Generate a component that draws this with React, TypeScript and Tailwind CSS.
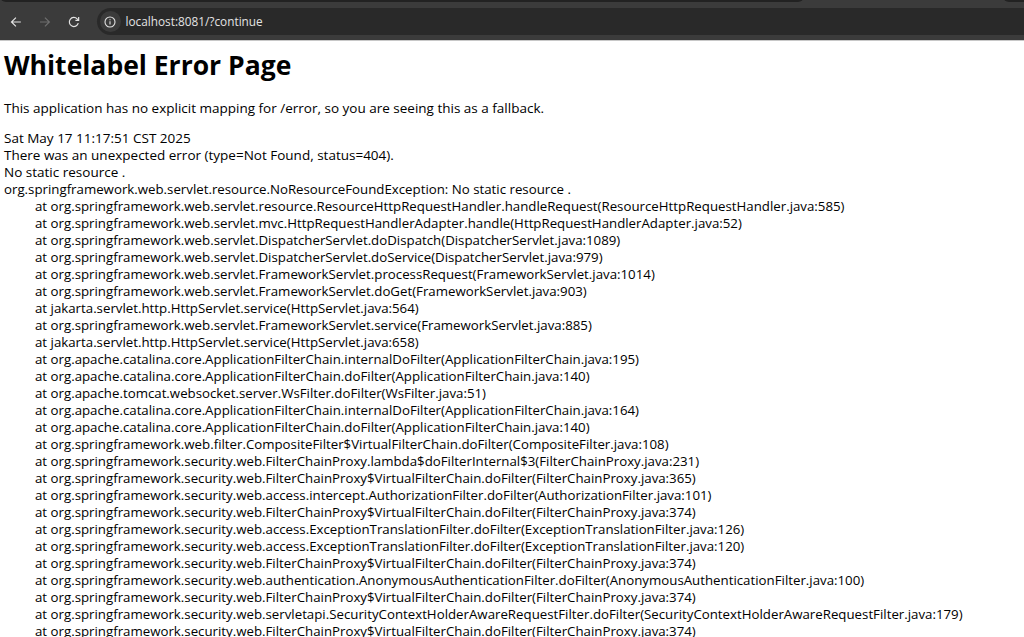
const lines = [
  "org.springframework.web.servlet.resource.ResourceHttpRequestHandler.handleRequest(ResourceHttpRequestHandler.java:585)",
  "org.springframework.web.servlet.mvc.HttpRequestHandlerAdapter.handle(HttpRequestHandlerAdapter.java:52)",
  "org.springframework.web.servlet.DispatcherServlet.doDispatch(DispatcherServlet.java:1089)",
  "org.springframework.web.servlet.DispatcherServlet.doService(DispatcherServlet.java:979)",
  "org.springframework.web.servlet.FrameworkServlet.processRequest(FrameworkServlet.java:1014)",
  "org.springframework.web.servlet.FrameworkServlet.doGet(FrameworkServlet.java:903)",
  "jakarta.servlet.http.HttpServlet.service(HttpServlet.java:564)",
  "org.springframework.web.servlet.FrameworkServlet.service(FrameworkServlet.java:885)",
  "jakarta.servlet.http.HttpServlet.service(HttpServlet.java:658)",
  "org.apache.catalina.core.ApplicationFilterChain.internalDoFilter(ApplicationFilterChain.java:195)",
  "org.apache.catalina.core.ApplicationFilterChain.doFilter(ApplicationFilterChain.java:140)",
  "org.apache.tomcat.websocket.server.WsFilter.doFilter(WsFilter.java:51)",
  "org.apache.catalina.core.ApplicationFilterChain.internalDoFilter(ApplicationFilterChain.java:164)",
  "org.apache.catalina.core.ApplicationFilterChain.doFilter(ApplicationFilterChain.java:140)",
  "org.springframework.web.filter.CompositeFilter$VirtualFilterChain.doFilter(CompositeFilter.java:108)",
  "org.springframework.security.web.FilterChainProxy.lambda$doFilterInternal$3(FilterChainProxy.java:231)",
  "org.springframework.security.web.FilterChainProxy$VirtualFilterChain.doFilter(FilterChainProxy.java:365)",
  "org.springframework.security.web.access.intercept.AuthorizationFilter.doFilter(AuthorizationFilter.java:101)",
  "org.springframework.security.web.FilterChainProxy$VirtualFilterChain.doFilter(FilterChainProxy.java:374)",
  "org.springframework.security.web.access.ExceptionTranslationFilter.doFilter(ExceptionTranslationFilter.java:126)",
  "org.springframework.security.web.access.ExceptionTranslationFilter.doFilter(ExceptionTranslationFilter.java:120)",
  "org.springframework.security.web.FilterChainProxy$VirtualFilterChain.doFilter(FilterChainProxy.java:374)",
  "org.springframework.security.web.authentication.AnonymousAuthenticationFilter.doFilter(AnonymousAuthenticationFilter.java:100)",
  "org.springframework.security.web.FilterChainProxy$VirtualFilterChain.doFilter(FilterChainProxy.java:374)",
  "org.springframework.security.web.servletapi.SecurityContextHolderAwareRequestFilter.doFilter(SecurityContextHolderAwareRequestFilter.java:179)",
  "org.springframework.security.web.FilterChainProxy$VirtualFilterChain.doFilter(FilterChainProxy.java:374)",
];

export default function App() {
  return (
    <div className="h-[637px] w-[1024px] overflow-hidden bg-white font-['Open_Sans','Noto_Sans',sans-serif] text-black">
      <div className="relative h-[41px] overflow-hidden border-b border-[#c8c8c8] bg-[#3b3b3b] pt-[8px]">
        <div className="absolute top-[-8px] left-0 h-[10px] w-[804px] rounded-b-[6px] bg-[#222222]" />
        <div className="absolute top-[-8px] left-[1003px] h-[10px] w-[40px] rounded-b-[6px] bg-[#222222]" />
        <div className="flex h-[27px] items-center">
          <svg className="ml-[10px] h-[12px] w-[12px]" viewBox="0 0 12 12" fill="none" stroke="#e3e3e3" strokeWidth="1.2"><path d="M11 6H1.5M6 1.5 1.5 6 6 10.5" /></svg>
          <svg className="ml-[17px] h-[12px] w-[12px]" viewBox="0 0 12 12" fill="none" stroke="#6f6f6f" strokeWidth="1.2"><path d="M1 6h9.5M6 1.5 10.5 6 6 10.5" /></svg>
          <svg className="ml-[17px] h-[12px] w-[12px]" viewBox="0 0 12 12" fill="none" stroke="#e3e3e3" strokeWidth="1.2"><path d="M10.4 7.2A4.6 4.6 0 1 1 9.3 2.8L10.6 4" /><path d="M10.8 1v3.3H7.5" /></svg>
          <div className="ml-[17px] flex h-[27px] w-[940px] items-center rounded-l-[14px] bg-[#292929]">
            <div className="ml-[3px] flex h-[21px] w-[21px] items-center justify-center rounded-full bg-[#3b3b3b]">
              <svg className="h-[12px] w-[12px]" viewBox="0 0 12 12" fill="none" stroke="#e3e3e3" strokeWidth="1.1"><circle cx="6" cy="6" r="5" /><path d="M6 5.2v3.3M6 3.2v1" /></svg>
            </div>
            <span className="ml-[5px] text-[11.8px] leading-[15px] text-[#e3e3e3]">localhost:8081/?continue</span>
          </div>
        </div>
      </div>
      <div className="px-[4px]">
        <h1 className="mt-[5px] text-[26.5px] leading-[38px] font-bold">Whitelabel Error Page</h1>
        <p className="mt-[15px] text-[13.5px] leading-[19px]">This application has no explicit mapping for /error, so you are seeing this as a fallback.</p>
        <div className="mt-[12px] text-[13.27px] leading-[17px] whitespace-nowrap">
          <div className="text-[13.5px]">Sat May 17 11:17:51 CST 2025</div>
          <div className="text-[13.5px]">There was an unexpected error (type=Not Found, status=404).</div>
          <div className="text-[13.5px]">No static resource .</div>
          <div>org.springframework.web.servlet.resource.NoResourceFoundException: No static resource .</div>
          {lines.map((line, i) => (
            <div key={i} className="pl-[31px]">at {line}</div>
          ))}
        </div>
      </div>
    </div>
  );
}
